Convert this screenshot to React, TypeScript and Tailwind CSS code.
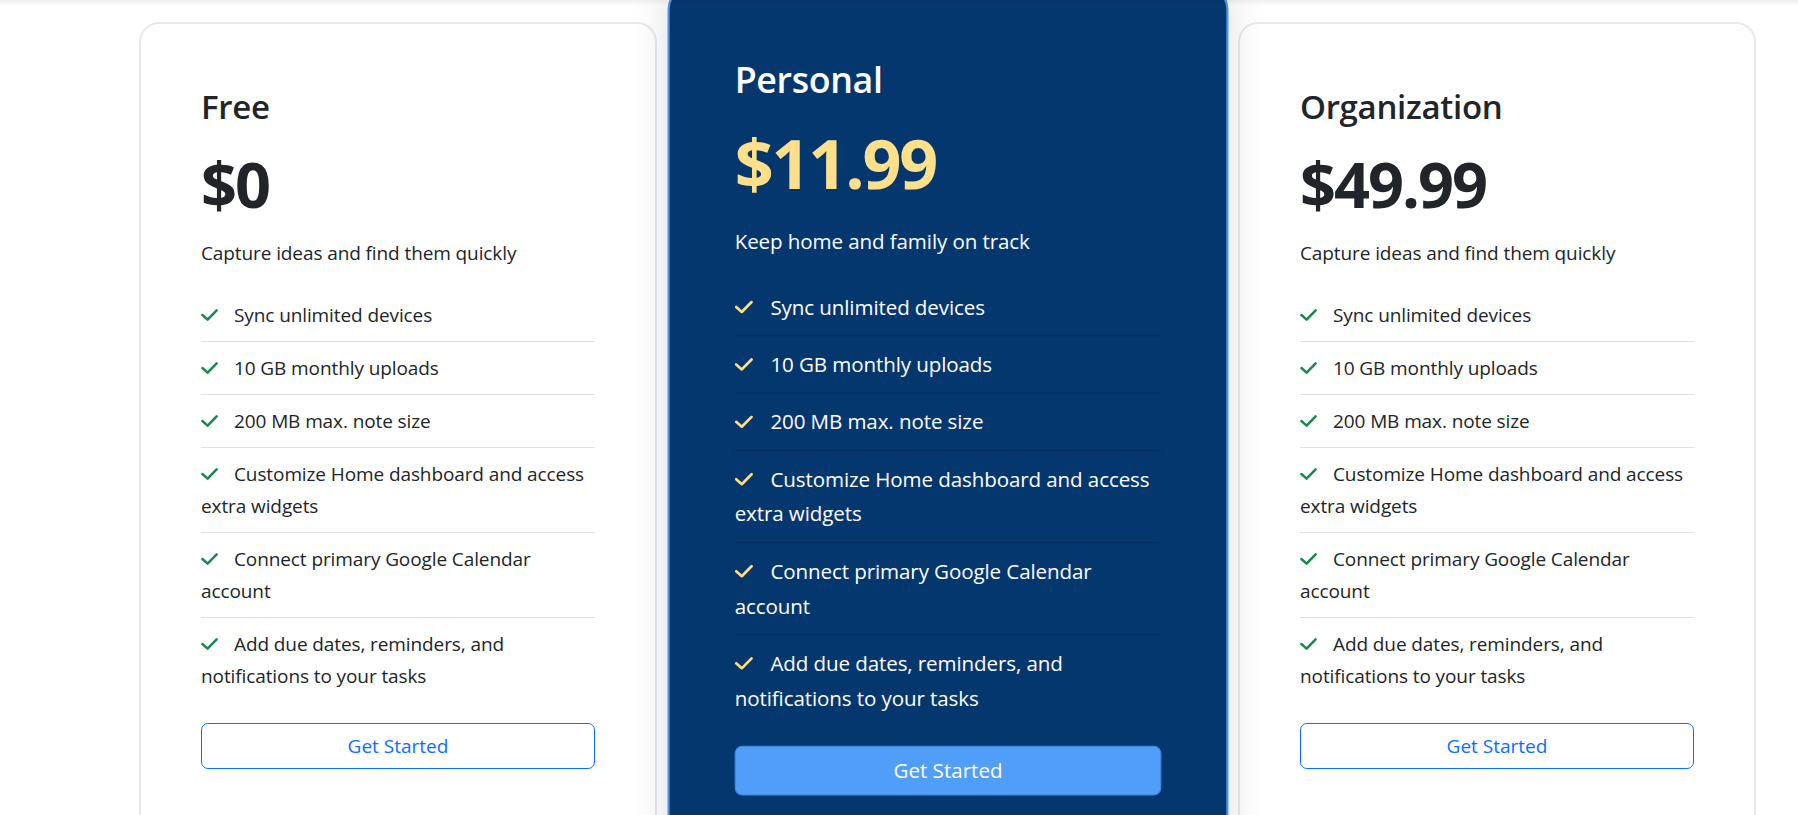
import React from "react";

type Plan = {
  name: string;
  price: string;
  desc: string;
  featured?: boolean;
};

const features = [
  "Sync unlimited devices",
  "10 GB monthly uploads",
  "200 MB max. note size",
  "Customize Home dashboard and access extra widgets",
  "Connect primary Google Calendar account",
  "Add due dates, reminders, and notifications to your tasks",
];

const plans: Plan[] = [
  { name: "Free", price: "$0", desc: "Capture ideas and find them quickly" },
  { name: "Personal", price: "$11.99", desc: "Keep home and family on track", featured: true },
  { name: "Organization", price: "$49.99", desc: "Capture ideas and find them quickly" },
];

function Check({ featured }: { featured?: boolean }) {
  return (
    <svg
      width="17"
      height="12"
      viewBox="0 0 17 12"
      className={featured ? "inline-block align-[1px] mr-[16px] text-[#ffdd80]" : "inline-block align-[1px] mr-[16px] text-[#198754]"}
      fill="none"
      stroke="currentColor"
      strokeWidth="2.5"
      strokeLinecap="round"
      strokeLinejoin="round"
    >
      <path d="M1.4 6 L6.6 10.6 L15.6 1.4" />
    </svg>
  );
}

function Card({ plan }: { plan: Plan }) {
  const f = plan.featured;
  return (
    <div
      className={
        f
          ? "relative z-10 w-[518px] h-[830px] shrink-0 rounded-[20px] border-2 border-[#4f95ec] bg-[#05376f] px-[60px] pt-[62px] scale-[1.083] shadow-[0_0_36px_rgba(0,0,0,0.13)]"
          : "relative w-[518px] h-[830px] shrink-0 rounded-[20px] border-2 border-[#e6e9ed] bg-white px-[60px] pt-[62px]"
      }
    >
      <h3
        className={
          f
            ? "text-[33px] leading-[42px] font-semibold tracking-[-0.3px] text-white"
            : "text-[33px] leading-[42px] font-semibold tracking-[-0.3px] text-[#212529]"
        }
      >
        {plan.name}
      </h3>
      <div
        className={
          f
            ? "mt-[18px] text-[63px] leading-[76px] font-bold tracking-[-2px] text-[#ffe08a]"
            : "mt-[18px] text-[63px] leading-[76px] font-bold tracking-[-2px] text-[#212529]"
        }
      >
        {plan.price}
      </div>
      <p
        className={
          f
            ? "mt-[18px] mb-[19px] text-[19px] leading-[32px] tracking-[-0.1px] text-white"
            : "mt-[15px] mb-[20px] text-[19px] leading-[32px] tracking-[-0.1px] text-[#212529]"
        }
      >
        {plan.desc}
      </p>
      <ul>
        {features.map((t, i) => (
          <li
            key={t}
            className={
              (f ? "text-white border-[#032d5e] " : "text-[#212529] border-[#dee2e6] ") +
              (i < features.length - 1 ? "border-b " : "") +
              "py-[10px] text-[19px] leading-[32px] tracking-[-0.1px]"
            }
          >
            <Check featured={f} />
            {t}
          </li>
        ))}
      </ul>
      <button
        className={
          f
            ? "mt-[18px] w-full h-[46px] rounded-[7px] border border-[#3f87e0] bg-[#519ef8] text-[19px] text-white"
            : "mt-[21px] w-full h-[46px] rounded-[7px] border border-[#0d6efd] bg-white text-[19px] text-[#0d6efd]"
        }
      >
        Get Started
      </button>
    </div>
  );
}

export default function App() {
  return (
    <div
      className="relative w-full h-[815px] overflow-hidden bg-white"
      style={{ fontFamily: '"Open Sans", "Noto Sans", sans-serif' }}
    >
      <div className="absolute left-0 right-0 top-0 z-20 h-[6px] bg-gradient-to-b from-black/[0.06] to-transparent" />
      <div className="flex items-start gap-[31.5px] pl-[139px] pt-[22px]">
        {plans.map((p) => (
          <Card key={p.name} plan={p} />
        ))}
      </div>
    </div>
  );
}
